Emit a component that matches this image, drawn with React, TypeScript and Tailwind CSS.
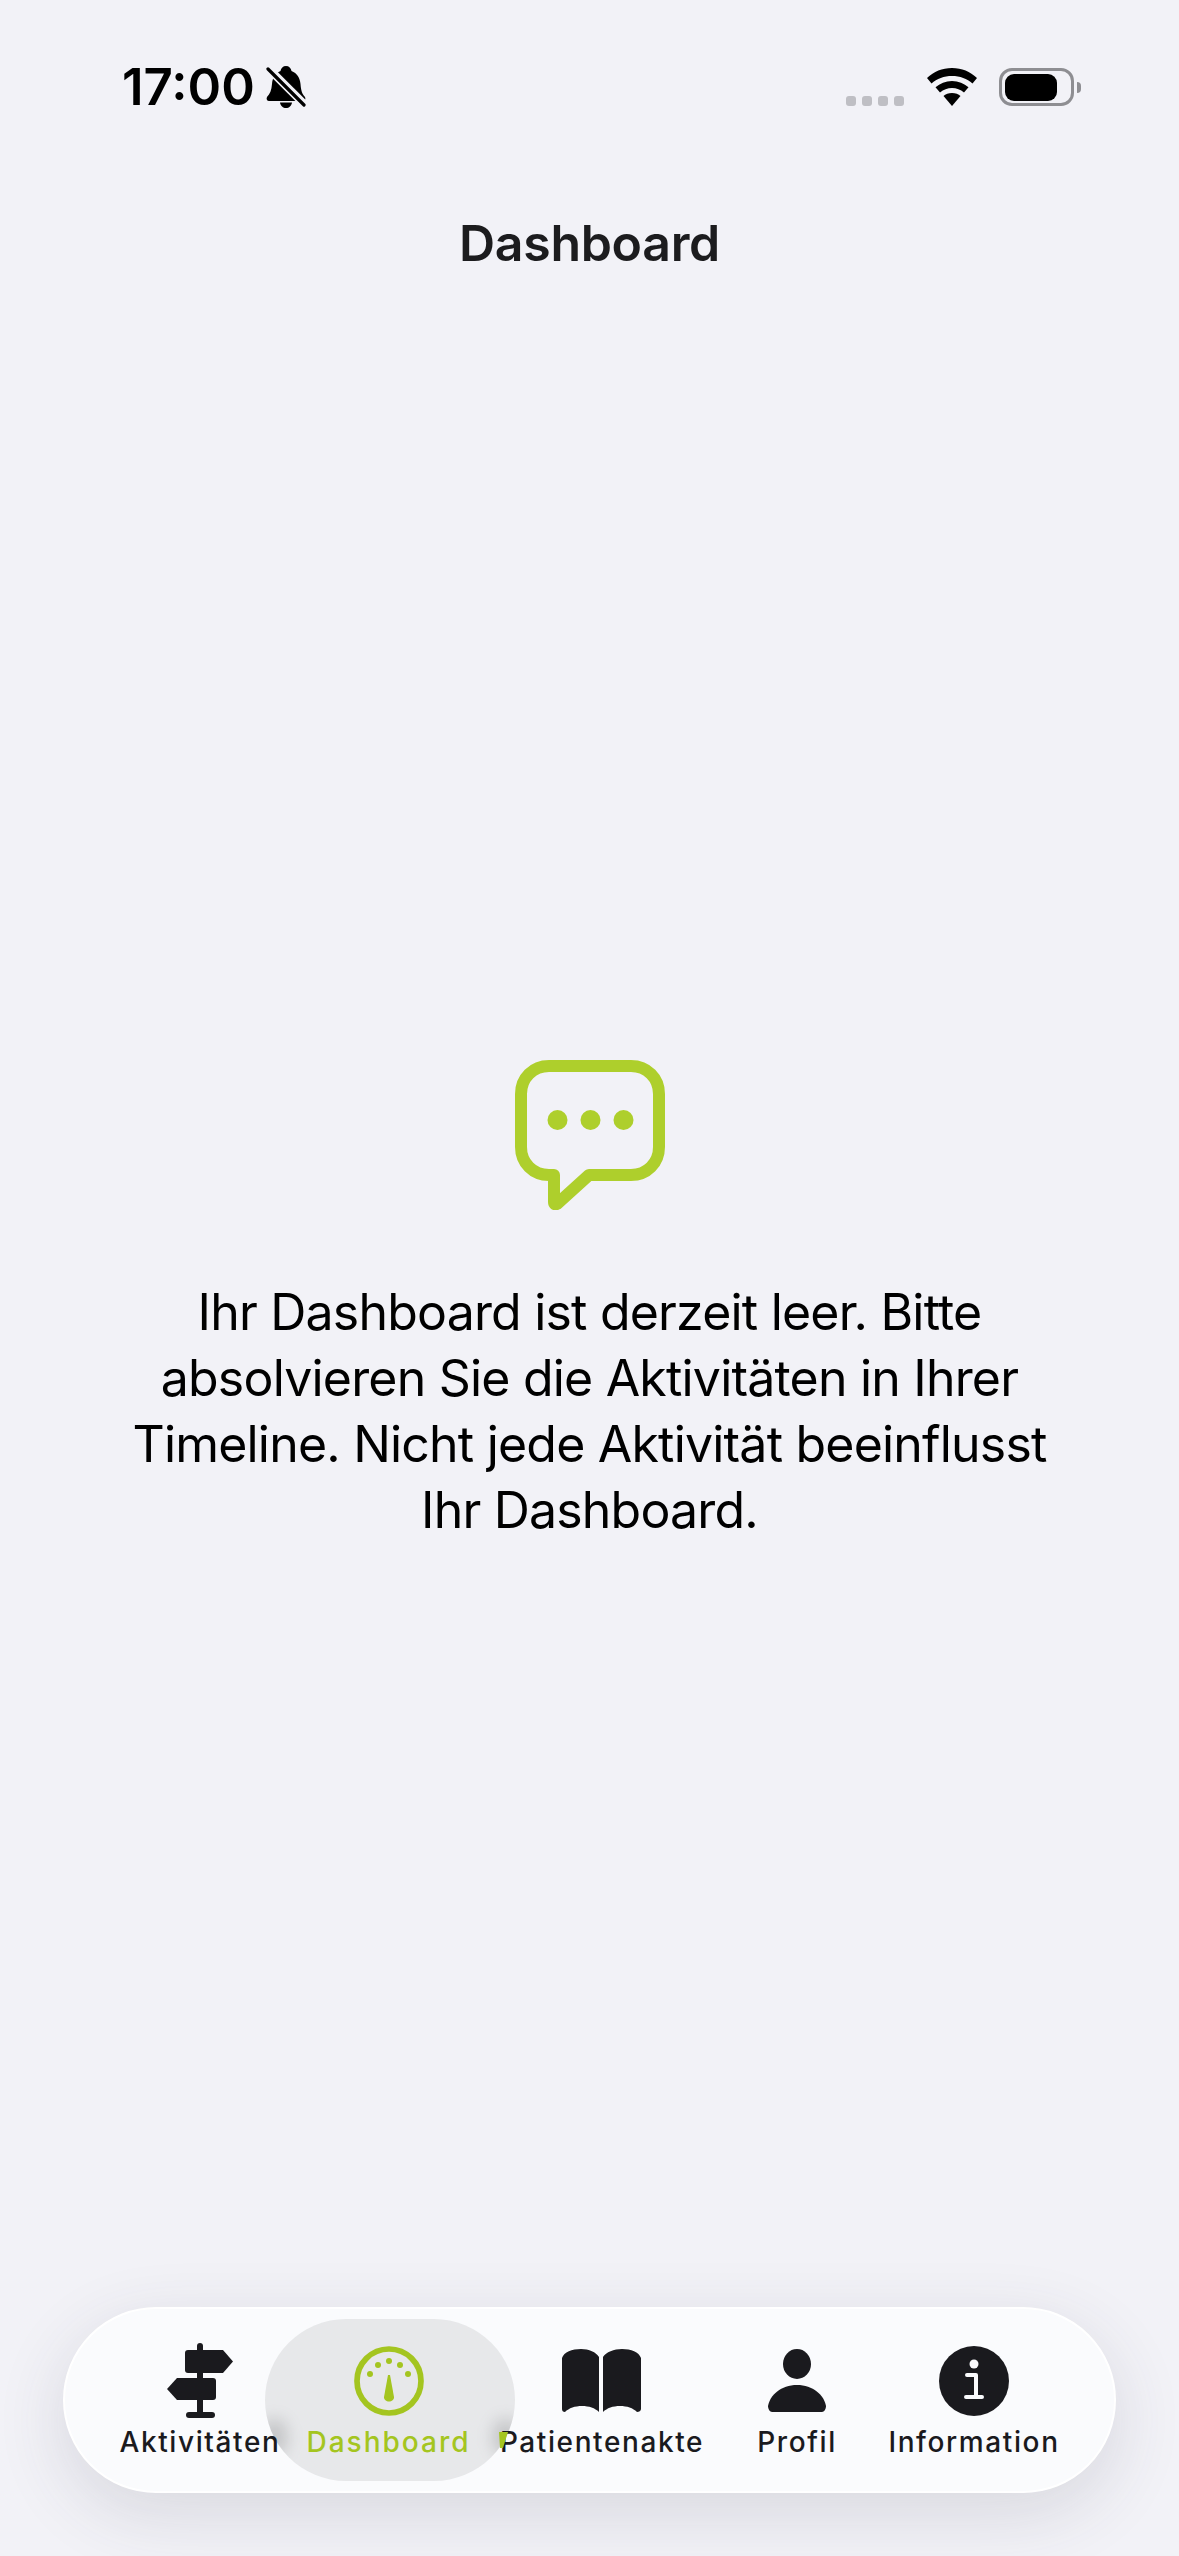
import type { ReactNode } from 'react';

const GREEN = '#a4c520';
const BUBBLE_GREEN = '#aecf2c';
const DARK = '#1a1a1e';

function BellOff() {
  return (
    <svg width="40" height="42" viewBox="0 0 40 42">
      <path d="M20 0c3 0 5 2 5.500 5C31 7 34 12 34.500 18c.5 6 1.500 10 4.500 13 1 2 0 4-2 4H3c-2 0-3-2-2-4 3-3 4.500-7 5-13 .5-6 3-11 8.500-13C15 2 17 0 20 0z" fill="#000" />
      <path d="M14 36.500h12c-.5 3.500-3 5.500-6 5.500s-5.500-2-6-5.500z" fill="#000" />
      <path d="M1 1l38 38" stroke="#f2f2f7" strokeWidth="8" />
      <path d="M2 3l36 36" stroke="#000" strokeWidth="3.200" strokeLinecap="round" />
    </svg>
  );
}

function StatusBar() {
  return (
    <div className="flex items-center justify-between pl-[122px] pr-[98px] pt-[57px]">
      <div className="flex h-[60px] items-center gap-[11px]">
        <span className="text-[51px] leading-[60px] font-semibold text-black">17:00</span>
        <BellOff />
      </div>
      <div className="flex h-[60px] items-center">
        <div className="mr-[23px] mt-[28px] flex gap-[6px]">
          <span className="h-[10px] w-[10px] rounded-[3px] bg-[#bfbfc4]" />
          <span className="h-[10px] w-[10px] rounded-[3px] bg-[#bfbfc4]" />
          <span className="h-[10px] w-[10px] rounded-[3px] bg-[#bfbfc4]" />
          <span className="h-[10px] w-[10px] rounded-[3px] bg-[#bfbfc4]" />
        </div>
        <svg width="50" height="38" viewBox="0 0 50 38" className="mr-[22px]">
          <path d="M25 0c10 0 18 3.500 25 10l-4.500 5.500C40 10.500 33 8 25 8S10 10.500 4.500 15.500L0 10C7 3.500 15 0 25 0z" fill="#000" />
          <path d="M25 13c6.500 0 12 2.300 16.500 6.300L37 24.500C33.500 21.500 29.500 20 25 20s-8.500 1.500-12 4.500l-4.500-5.200C13 15.300 18.500 13 25 13z" fill="#000" />
          <path d="M25 25c3.500 0 6.500 1.200 8.500 3L25 38l-8.500-10c2-1.800 5-3 8.500-3z" fill="#000" />
        </svg>
        <div className="flex items-center">
          <div className="flex h-[38px] w-[75px] items-center rounded-[13px] border-[3px] border-[#8e8e92] pl-[3px]">
            <div className="h-[27px] w-[52px] rounded-[9px] bg-black" />
          </div>
          <div className="ml-[3px] h-[11px] w-[4px] rounded-r-[4px] bg-[#8e8e92]" />
        </div>
      </div>
    </div>
  );
}

function SignpostIcon() {
  return (
    <svg width="70" height="78" viewBox="0 0 70 78">
      <rect x="32" y="1" width="6" height="74" rx="3" fill={DARK} />
      <path d="M23 8h35l10 11.500L58 31H23c-2 0-3-1-3-3V11c0-2 1-3 3-3z" fill={DARK} />
      <path d="M48 36H12L2 47l10 11h36c2 0 3-1 3-3V39c0-2-1-3-3-3z" fill={DARK} />
      <rect x="21" y="70" width="29" height="6" rx="3" fill={DARK} />
    </svg>
  );
}

function GaugeIcon() {
  return (
    <svg width="70" height="70" viewBox="0 0 70 70">
      <circle cx="35" cy="35" r="32" fill="none" stroke={GREEN} strokeWidth="5.700" />
      <circle cx="35" cy="15" r="3" fill={GREEN} />
      <circle cx="24" cy="19" r="3" fill={GREEN} />
      <circle cx="46" cy="19" r="3" fill={GREEN} />
      <circle cx="16" cy="28" r="3" fill={GREEN} />
      <circle cx="54" cy="28" r="3" fill={GREEN} />
      <path d="M34 29h2l4 22c.3 2.500-2.400 4.500-5 4.500s-5.300-2-5-4.500z" fill={GREEN} />
    </svg>
  );
}

function BookIcon() {
  return (
    <svg width="80" height="63" viewBox="0 0 80 63">
      <path d="M37 8v55c-4-4-10-6-17-6S7 59 3 63c-2 0-3-1-3-3V9C2 3 10 0 19 0c8 0 15 3 18 8z" fill={DARK} />
      <path d="M41 8v55c4-4 10-6 17-6s13 2 17 6c2 0 4-1 4-3V9C77 3 69 0 60 0c-8 0-16 3-19 8z" fill={DARK} />
    </svg>
  );
}

function PersonIcon() {
  return (
    <svg width="58" height="63" viewBox="0 0 58 63">
      <ellipse cx="29" cy="15" rx="14" ry="15" fill={DARK} />
      <path d="M29 36c16 0 27 10 29 21 0 3-2 6-4 6H4c-2 0-4-3-4-6C2 46 13 36 29 36z" fill={DARK} />
    </svg>
  );
}

function InfoIcon() {
  return (
    <svg width="70" height="70" viewBox="0 0 70 70">
      <circle cx="35" cy="35" r="35" fill={DARK} />
      <circle cx="35" cy="18" r="4.500" fill="#fafbfd" />
      <path d="M28 29h9v20M27 51h16" fill="none" stroke="#fafbfd" strokeWidth="4" strokeLinecap="round" strokeLinejoin="round" />
    </svg>
  );
}

function TabItem({ icon, label, width, className }: { icon: ReactNode; label: string; width: string; className?: string }) {
  return (
    <div className={`relative flex flex-col items-center ${width}`}>
      <div className="flex h-[78px] items-center justify-center">{icon}</div>
      <span className={`mt-[5px] text-[28px] leading-[34px] font-[450] tracking-[1.600px] whitespace-nowrap ${className ?? 'text-[#1a1a1e]'}`}>{label}</span>
    </div>
  );
}

function TabBar() {
  return (
    <nav className="relative mx-[63px] flex h-[186px] items-center rounded-[93px] border-[2px] border-white bg-[#fafbfd] pl-[40px] shadow-[0_20px_70px_rgba(60,60,80,0.14)]">
      {/* selected pill, the soft spots are where it bends the labels next to it */}
      <div className="absolute left-[200px] top-[10px] h-[162px] w-[250px] overflow-hidden rounded-[81px] bg-[#e7e8ea]">
        <div className="absolute left-[-4px] top-[100px] h-[36px] w-[26px] rounded-full bg-black/15 blur-[8px]" />
        <div className="absolute right-[-4px] top-[100px] h-[36px] w-[26px] rounded-full bg-black/15 blur-[8px]" />
      </div>
      <TabItem icon={<SignpostIcon />} label="Aktivitäten" width="w-[190px]" />
      <TabItem icon={<GaugeIcon />} label="Dashboard" width="w-[187px]" className="text-[#a4c520] tracking-[2px]" />
      <TabItem icon={<BookIcon />} label="Patientenakte" width="w-[240px]" />
      <TabItem icon={<PersonIcon />} label="Profil" width="w-[150px]" />
      <TabItem icon={<InfoIcon />} label="Information" width="w-[204px]" />
      <svg width="10" height="17" viewBox="0 0 10 17" className="absolute left-[434px] top-[123px]">
        <path d="M0 0h9L4 16H1z" fill={GREEN} />
      </svg>
    </nav>
  );
}

export default function App() {
  return (
    <div className="flex h-[2556px] w-[1179px] flex-col overflow-hidden bg-[#f2f2f7] font-['Inter','Noto_Sans',sans-serif]">
      <StatusBar />
      <h1 className="mt-[94px] text-center text-[50px] leading-[64px] font-semibold tracking-[-0.300px] text-[#1c1c1e]">Dashboard</h1>
      <main className="flex flex-1 flex-col items-center pt-[785px]">
        <svg width="150" height="150" viewBox="0 0 150 150">
          <path d="M34 6h82c16 0 28 12 28 28v53c0 16-12 28-28 28H74L42 144c-2 1-3 0-3-2v-27h-5C18 115 6 103 6 87V34C6 18 18 6 34 6z" fill="none" stroke={BUBBLE_GREEN} strokeWidth="12" strokeLinejoin="round" />
          <circle cx="42.500" cy="60" r="10" fill={BUBBLE_GREEN} />
          <circle cx="75.500" cy="60" r="10" fill={BUBBLE_GREEN} />
          <circle cx="108.500" cy="60" r="10" fill={BUBBLE_GREEN} />
        </svg>
        <p className="mt-[69px] w-[960px] text-center text-[50px] leading-[66px] tracking-[-0.800px] text-black">
          Ihr Dashboard ist derzeit leer. Bitte absolvieren Sie die Aktivitäten in Ihrer Timeline. Nicht jede Aktivität beeinflusst Ihr Dashboard.
        </p>
      </main>
      <div className="pb-[63px]">
        <TabBar />
      </div>
    </div>
  );
}
